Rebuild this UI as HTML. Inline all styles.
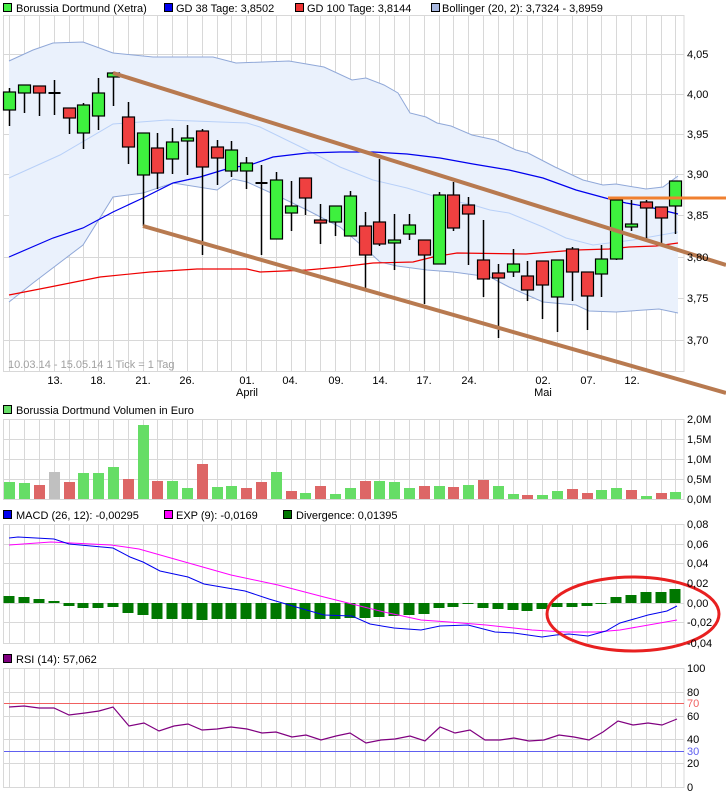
<!DOCTYPE html>
<html><head><meta charset="utf-8">
<style>
html,body{margin:0;padding:0;background:#fff;}
svg{display:block;font-family:"Liberation Sans",Arial,sans-serif;font-size:11px;}
</style></head>
<body>
<svg id="s" width="726" height="796" viewBox="0 0 726 796" xmlns="http://www.w3.org/2000/svg">
<g id="grid"></g>
<g id="fill"></g>
<g id="lines"></g>
<g id="cands"></g>
<g id="extra"></g>
<g id="txt" fill="#000">
<rect x="3.5" y="3.5" width="8" height="8" fill="#44ee44" stroke="#000"/>
<text x="16" y="12">Borussia Dortmund (Xetra)</text>
<rect x="164.5" y="3.5" width="8" height="8" fill="#0000ee" stroke="#000"/>
<text x="176" y="12">GD 38 Tage: 3,8502</text>
<rect x="295.5" y="3.5" width="8" height="8" fill="#ee3333" stroke="#000"/>
<text x="307" y="12">GD 100 Tage: 3,8144</text>
<rect x="431.5" y="3.5" width="8" height="8" fill="#a8b8e0" stroke="#000"/>
<text x="442" y="12">Bollinger (20, 2): 3,7324 - 3,8959</text>

<text x="687" y="58">4,05</text>
<text x="687" y="98">4,00</text>
<text x="687" y="138">3,95</text>
<text x="687" y="178">3,90</text>
<text x="687" y="219">3,85</text>
<text x="687" y="261">3,80</text>
<text x="687" y="302">3,75</text>
<text x="687" y="344">3,70</text>
<text x="8" y="368" fill="#a0a0a0">10.03.14 - 15.05.14   1 Tick = 1 Tag</text>
<g text-anchor="middle">
<text x="55" y="384">13.</text><text x="98" y="384">18.</text><text x="143" y="384">21.</text><text x="187" y="384">26.</text>
<text x="247" y="384">01.</text><text x="290" y="384">04.</text><text x="336" y="384">09.</text><text x="380" y="384">14.</text>
<text x="424" y="384">17.</text><text x="469" y="384">24.</text><text x="543" y="384">02.</text><text x="588" y="384">07.</text>
<text x="632" y="384">12.</text>
<text x="247" y="396">April</text><text x="543" y="396">Mai</text>
</g>

<rect x="3.5" y="405.5" width="8" height="8" fill="#66dd66" stroke="#000"/>
<text x="16" y="414">Borussia Dortmund Volumen in Euro</text>
<text x="687" y="423">2,0M</text>
<text x="687" y="443">1,5M</text>
<text x="687" y="463">1,0M</text>
<text x="687" y="483">0,5M</text>
<text x="687" y="503">0,0M</text>

<rect x="3.5" y="510.5" width="8" height="8" fill="#0000ee" stroke="#000"/>
<text x="16" y="519">MACD (26, 12): -0,00295</text>
<rect x="164.5" y="510.5" width="8" height="8" fill="#ff00ff" stroke="#000"/>
<text x="176" y="519">EXP (9): -0,0169</text>
<rect x="283.5" y="510.5" width="8" height="8" fill="#007700" stroke="#000"/>
<text x="296" y="519">Divergence: 0,01395</text>
<text x="687" y="528">0,08</text>
<text x="687" y="548">0,06</text>
<text x="687" y="567">0,04</text>
<text x="687" y="587">0,02</text>
<text x="687" y="607">0,00</text>
<text x="687" y="626">-0,02</text>
<text x="687" y="647">-0,04</text>

<rect x="3.5" y="654.5" width="8" height="8" fill="#800080" stroke="#000"/>
<text x="16" y="663">RSI (14): 57,062</text>
<text x="687" y="672">100</text>
<text x="687" y="696">80</text>
<text x="687" y="707" fill="#f06060">70</text>
<text x="687" y="720">60</text>
<text x="687" y="743">40</text>
<text x="687" y="755" fill="#6060f0">30</text>
<text x="687" y="767">20</text>
<text x="687" y="791">0</text>
</g>
</svg>
<script>
var NS="http://www.w3.org/2000/svg";
function el(p,t,a){var e=document.createElementNS(NS,t);for(var k in a)e.setAttribute(k,a[k]);document.getElementById(p).appendChild(e);return e;}
function X(i){return 9.3+14.8*i;}
var G="#d8d8d8";
// panels
var panels=[[15,371],[419,499],[524,643],[668,787]];
panels.forEach(function(p){
  el("grid","rect",{x:3.5,y:p[0]+.5,width:680.5,height:p[1]-p[0],fill:"none",stroke:G});
  for(var i=0;i<46;i++){var x=Math.round(X(i))+.5;el("grid","line",{x1:x,x2:x,y1:p[0],y2:p[1],stroke:G});}
});
function hl(y,c){el("grid","line",{x1:4,x2:684,y1:y+.5,y2:y+.5,stroke:c||G});}
[54,94,134,174,215,257,298,340].forEach(function(y){hl(y)});
[439,459,479].forEach(function(y){hl(y)});
[544,563,583,603,622].forEach(function(y){hl(y)});
[692,716,739,763].forEach(function(y){hl(y)});
hl(703,"#f06060");hl(751,"#6060f0");

function pts(a){return a.map(function(p){return p[0]+","+p[1]}).join(" ");}
var up=[[9,61],[33,50],[53,43],[83,42],[113,53],[153,57],[177,57],[213,57],[236,63],[289,61],[324,67],[352,80],[366,78],[384,85],[398,93],[410,113],[426,117],[437,123],[451,126],[472,135],[495,140],[516,150],[528,153],[555,167],[583,180],[603,185],[616,184],[646,189],[663,187],[678,176]];
var lo=[[9,302],[33,283],[83,245],[113,197],[143,193],[173,183],[217,190],[233,179],[247,182],[280,197],[307,210],[340,227],[367,250],[380,262],[397,266],[427,270],[453,272],[490,277],[509,287],[543,302],[576,305],[589,311],[616,312],[659,309],[678,313]];
el("fill","polygon",{points:pts(up.concat(lo.slice().reverse())),fill:"#eaf1fc"});
el("lines","polyline",{points:pts(up),fill:"none",stroke:"#90a8d8","stroke-width":1});
el("lines","polyline",{points:pts(lo),fill:"none",stroke:"#90a8d8","stroke-width":1});
var mid=[[9,178],[60,155],[113,124],[167,120],[247,123],[260,127],[307,150],[340,167],[373,180],[407,188],[440,198],[473,205],[490,210],[509,213],[543,227],[566,238],[593,245],[609,243],[633,240],[678,232]];
el("lines","polyline",{points:pts(mid),fill:"none",stroke:"#b8d0f8","stroke-width":1});
var gd38=[[9,257],[53,238],[83,228],[113,212],[143,198],[173,183],[200,177],[233,167],[247,166],[273,157],[307,153],[340,152],[373,152],[407,154],[440,158],[473,164],[509,170],[543,178],[576,190],[609,199],[626,203],[649,207],[678,214]];
el("lines","polyline",{points:pts(gd38),fill:"none",stroke:"#0000ee","stroke-width":1.2});
var gd100=[[9,295],[50,287],[100,277],[150,272],[197,269],[247,269],[260,272],[307,270],[340,267],[373,263],[413,262],[433,257],[457,253],[526,254],[576,250],[609,249],[629,247],[656,246],[678,243]];
el("lines","polyline",{points:pts(gd100),fill:"none",stroke:"#ee0000","stroke-width":1.2});

// candles: i, wickTop, wickBot, bodyTop, bodyBot, color(g/r/d)
var C=[[0,88,126,92,110,"g"],[1,85,113,85,93,"g"],[2,86,116,86,93,"r"],[3,80,115,93,93,"d"],[4,108,134,108,118,"r"],[5,103,149,105,133,"g"],[6,78,130,93,116,"g"],[7,72,106,73,77,"g"],[8,102,164,117,147,"r"],[9,133,226,133,175,"g"],[10,133,189,148,173,"r"],[11,128,174,142,159,"g"],[12,125,175,138,141,"g"],[13,129,255,131,167,"r"],[14,140,185,147,158,"r"],[15,141,177,150,171,"g"],[16,157,189,163,171,"g"],[17,165,255,183,183,"d"],[18,172,239,180,239,"g"],[19,181,231,206,213,"g"],[20,178,215,178,198,"r"],[21,204,244,220,223,"r"],[22,206,236,206,222,"g"],[23,191,236,196,236,"g"],[24,212,288,226,255,"r"],[25,159,246,222,244,"r"],[26,214,270,240,243,"g"],[27,214,240,225,234,"g"],[28,240,304,240,255,"r"],[29,192,264,195,264,"g"],[30,182,231,195,228,"r"],[31,197,265,205,214,"r"],[32,220,297,260,279,"r"],[33,264,338,273,278,"r"],[34,249,277,264,272,"g"],[35,261,301,276,290,"r"],[36,261,319,261,285,"r"],[37,260,332,260,297,"g"],[38,247,301,249,272,"r"],[39,272,330,272,296,"r"],[40,245,297,259,274,"g"],[41,200,260,200,259,"g"],[42,200,231,224,227,"g"],[43,200,239,202,208,"r"],[44,207,244,207,218,"r"],[45,181,234,181,206,"g"]];
C.forEach(function(c){var x=Math.round(X(c[0]))+.5;
  el("cands","line",{x1:x,x2:x,y1:c[1],y2:c[2],stroke:"#000","stroke-width":1.5});
  if(c[5]=="d"){el("cands","rect",{x:x-6,y:c[3]-1,width:12,height:2,fill:"#000"});}
  else el("cands","rect",{x:x-6,y:c[3],width:12,height:Math.max(2,c[4]-c[3]),fill:c[5]=="g"?"#3ef03e":"#ef4040",stroke:"#000","stroke-width":1.2});
});
// trendlines
el("extra","line",{x1:113,y1:73,x2:726,y2:265,stroke:"#b87a50","stroke-width":4});
el("extra","line",{x1:143,y1:226,x2:726,y2:393,stroke:"#b87a50","stroke-width":4});
el("extra","line",{x1:608,y1:198,x2:726,y2:198,stroke:"#f08030","stroke-width":3});

// volume
var V=[482,483,485,472,482,473,473,467,479,425,481,481,488,464,487,486,488,482,472,491,493,486,494,488,481,481,482,488,486,486,487,485,480,486,494,495,495,491,489,493,490,488,490,496,493,492];
var VC="ggrxrgggrgrggrggrrgrgrgg rggrgrgrggrggrrgggrgrg";
VC="ggrxrgggrgrggrggrrgrgrggrggrgrgrggrggrrggrgrg";
var vcol=["g","g","r","x","r","g","g","g","r","g","r","g","g","r","g","g","r","r","g","r","g","r","g","g","r","g","g","g","r","g","r","g","r","g","g","r","g","g","r","r","g","g","r","g","r","g"];
V.forEach(function(t,i){var x=Math.round(X(i));var c=vcol[i];
  el("cands","rect",{x:x-5,y:t,width:11,height:499-t,fill:c=="g"?"#66dd66":c=="r"?"#dd6666":"#c0c0c0"});});

// macd divergence
var D=[-7,-6,-4,-2,3,5,5,4,10,12,16,16,16,17,16,16,16,16,16,16,16,16,16,15,15,14,13,12,11,5,4,1,5,6,7,8,6,4,4,3,1,-6,-8,-11,-11,-14];
D.forEach(function(d,i){var x=Math.round(X(i));
  el("cands","rect",{x:x-5.5,y:d<0?603+d:603,width:11,height:Math.abs(d)||1,fill:"#007700"});});
var macd=[[9,538],[18,537],[54,539],[69,544],[113,548],[130,557],[143,562],[160,571],[188,577],[204,584],[245,591],[269,599],[296,607],[324,615],[352,616],[370,624],[394,628],[421,630],[440,626],[468,625],[495,632],[514,633],[542,637],[556,635],[569,634],[588,636],[606,631],[620,623],[648,615],[667,611],[677,606]];
var exp=[[9,545],[51,542],[111,545],[139,549],[185,562],[231,575],[278,585],[324,597],[352,604],[384,612],[421,620],[449,622],[486,625],[532,630],[565,632],[597,632],[620,630],[677,620]];
el("extra","polyline",{points:pts(exp),fill:"none",stroke:"#ff00ff","stroke-width":1});
el("extra","polyline",{points:pts(macd),fill:"none",stroke:"#0000ee","stroke-width":1});
el("extra","ellipse",{cx:633,cy:614,rx:86,ry:37,fill:"none",stroke:"#e82020","stroke-width":3});

// rsi
var rsi=[[9,707],[24,706],[39,708],[54,708],[69,715],[85,713],[99,711],[113,707],[129,726],[144,723],[159,731],[174,726],[188,724],[202,730],[217,729],[231,727],[247,729],[262,733],[276,732],[292,737],[306,735],[321,740],[336,736],[350,733],[366,743],[381,740],[395,739],[410,736],[425,741],[440,727],[455,733],[470,730],[485,740],[500,740],[514,738],[529,741],[544,740],[559,735],[574,737],[589,740],[603,732],[618,721],[633,725],[648,723],[662,725],[677,719]];
el("extra","polyline",{points:pts(rsi),fill:"none",stroke:"#800080","stroke-width":1.2});
</script>
</body></html>
